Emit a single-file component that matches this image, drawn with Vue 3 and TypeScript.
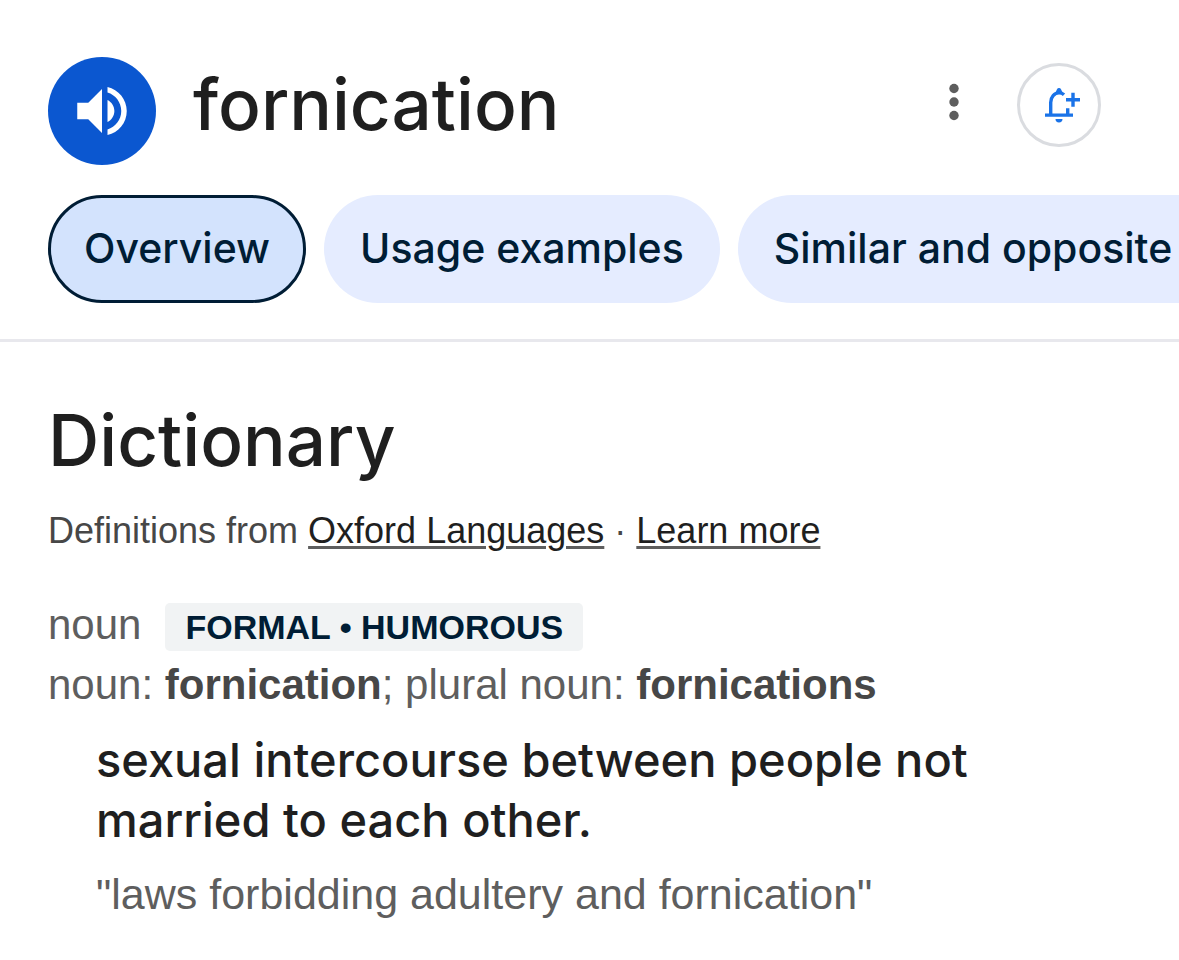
<script setup lang="ts">
import { ref } from 'vue'

const tabs: string[] = ['Overview', 'Usage examples', 'Similar and opposite']
const active = ref<string>('Overview')
</script>

<template>
  <main class="page">
    <header class="top">
      <button class="listen" type="button" aria-label="Listen">
        <svg width="66" height="66" viewBox="0 0 24 24" fill="currentColor" aria-hidden="true">
          <path d="M3 9v6h4l5 5V4L7 9H3zM16.5 12c0-1.77-1.02-3.29-2.5-4.03v8.05c1.48-.73 2.5-2.25 2.5-4.02zM14 3.23v2.06c2.89.86 5 3.54 5 6.71s-2.11 5.85-5 6.71v2.06c4.01-.91 7-4.49 7-8.77s-2.99-7.86-7-8.77z" />
        </svg>
      </button>
      <h1 class="word">fornication</h1>
      <div class="actions">
        <button class="more" type="button" aria-label="More options">
          <svg width="12" height="40" viewBox="0 0 12 40" fill="currentColor" aria-hidden="true">
            <circle cx="6" cy="6.500" r="4.700" />
            <circle cx="6" cy="20" r="4.700" />
            <circle cx="6" cy="33.500" r="4.700" />
          </svg>
        </button>
        <button class="notify" type="button" aria-label="Add notification">
          <svg width="42" height="42" viewBox="-7 -3 42 42" aria-hidden="true">
            <g fill="none" stroke="currentColor" stroke-width="3.400">
              <path d="M0 28.100h28M5.700 28V15.500C5.700 10 9.500 5.900 14 5.900c2 0 3.500.5 5 1.900M22.700 28V21.300" />
              <path d="M21 12.700h14M28 5.700v14" />
            </g>
            <path fill="currentColor" d="M10.500 5.500L12 2.200a2.200 2.200 0 0 1 4 0L17.500 5.500zM10.500 32h7a3.500 3.500 0 0 1-7 0z" />
          </svg>
        </button>
      </div>
    </header>

    <nav class="tabs" aria-label="Sections">
      <button
        v-for="tab in tabs"
        :key="tab"
        type="button"
        class="tab"
        :class="{ selected: tab === active }"
        @click="active = tab"
      >{{ tab }}</button>
    </nav>

    <section class="dictionary">
      <h2 class="heading">Dictionary</h2>
      <p class="source">
        Definitions from <a href="#oxford">Oxford Languages</a> · <a href="#learn">Learn more</a>
      </p>
      <div class="speech">
        <span class="part">noun</span>
        <span class="label">FORMAL • HUMOROUS</span>
      </div>
      <p class="forms">noun: <b>fornication</b>; plural noun: <b>fornications</b></p>
      <div class="entry">
        <p class="meaning">sexual intercourse between people not married to each other.</p>
        <p class="example">"laws forbidding adultery and fornication"</p>
      </div>
    </section>
  </main>
</template>

<style>
body {
  margin: 0;
  background: #fff;
}
</style>

<style scoped>
.page {
  overflow: hidden;
  color: #1f1f1f;
  font-family: "Liberation Sans", Arial, sans-serif;
}

h1, h2, p {
  margin: 0;
}

button {
  padding: 0;
  border: 0;
  font: inherit;
  cursor: pointer;
}

svg {
  display: block;
  overflow: visible;
}

.top {
  display: flex;
  align-items: flex-start;
  padding: 57px 78px 0 48px;
}

.listen {
  display: grid;
  place-items: center;
  width: 108px;
  height: 108px;
  border-radius: 50%;
  background: #0b57d0;
  color: #fff;
}

.word,
.heading {
  font-family: Inter, "Open Sans", sans-serif;
  font-size: 71px;
  font-weight: 500;
  line-height: 94px;
}

.word {
  margin-left: 37px;
}

.actions {
  display: flex;
  align-items: center;
  gap: 42px;
  margin: 6px 0 0 auto;
}

.more {
  display: grid;
  place-items: center;
  width: 42px;
  height: 84px;
  padding-bottom: 6px;
  background: none;
  color: #5e5e5e;
}

.notify {
  display: grid;
  place-items: center;
  width: 84px;
  height: 84px;
  border: 3px solid #dadce0;
  border-radius: 50%;
  background: #fff;
  color: #1a73e8;
}

.tabs {
  display: flex;
  gap: 18px;
  padding: 30px 0 36px 48px;
  border-bottom: 3px solid #e8e8ed;
}

.tab {
  flex: none;
  height: 108px;
  padding: 0 36px 2px;
  border-radius: 54px;
  background: #e5ecff;
  color: #001d35;
  font-family: Inter, "Open Sans", sans-serif;
  font-size: 41px;
  font-weight: 500;
  white-space: nowrap;
}

.tab:last-child {
  padding-right: 96px;
}

.selected {
  padding: 0 33px 2px;
  border: 3px solid #001d35;
  background: #d3e3fd;
}

.dictionary {
  padding: 51px 48px 36px;
}

.source {
  margin-top: 20px;
  color: #474747;
  font-size: 36px;
  line-height: 48px;
}

.source a {
  color: #1f1f1f;
  text-decoration: underline;
  text-decoration-color: #5e5e5e;
  text-decoration-thickness: 3px;
  text-underline-offset: 3px;
}

.speech {
  display: flex;
  align-items: baseline;
  gap: 24px;
  margin-top: 48px;
}

.part {
  color: #5e5e5e;
  font-size: 42px;
  line-height: 42px;
}

.label {
  padding: 0 20px;
  border-radius: 5px;
  background: #f1f3f4;
  color: #001d35;
  font-size: 34px;
  font-weight: 700;
  line-height: 48px;
}

.forms {
  margin-top: 10px;
  color: #5e5e5e;
  font-size: 42px;
  line-height: 48px;
}

.forms b {
  color: #474747;
}

.entry {
  padding: 21px 48px 0;
}

.meaning {
  max-width: 960px;
  font-family: Inter, "Open Sans", sans-serif;
  font-size: 47px;
  font-weight: 500;
  line-height: 60px;
}

.example {
  margin-top: 20px;
  color: #5e5e5e;
  font-size: 43px;
  line-height: 48px;
}
</style>
